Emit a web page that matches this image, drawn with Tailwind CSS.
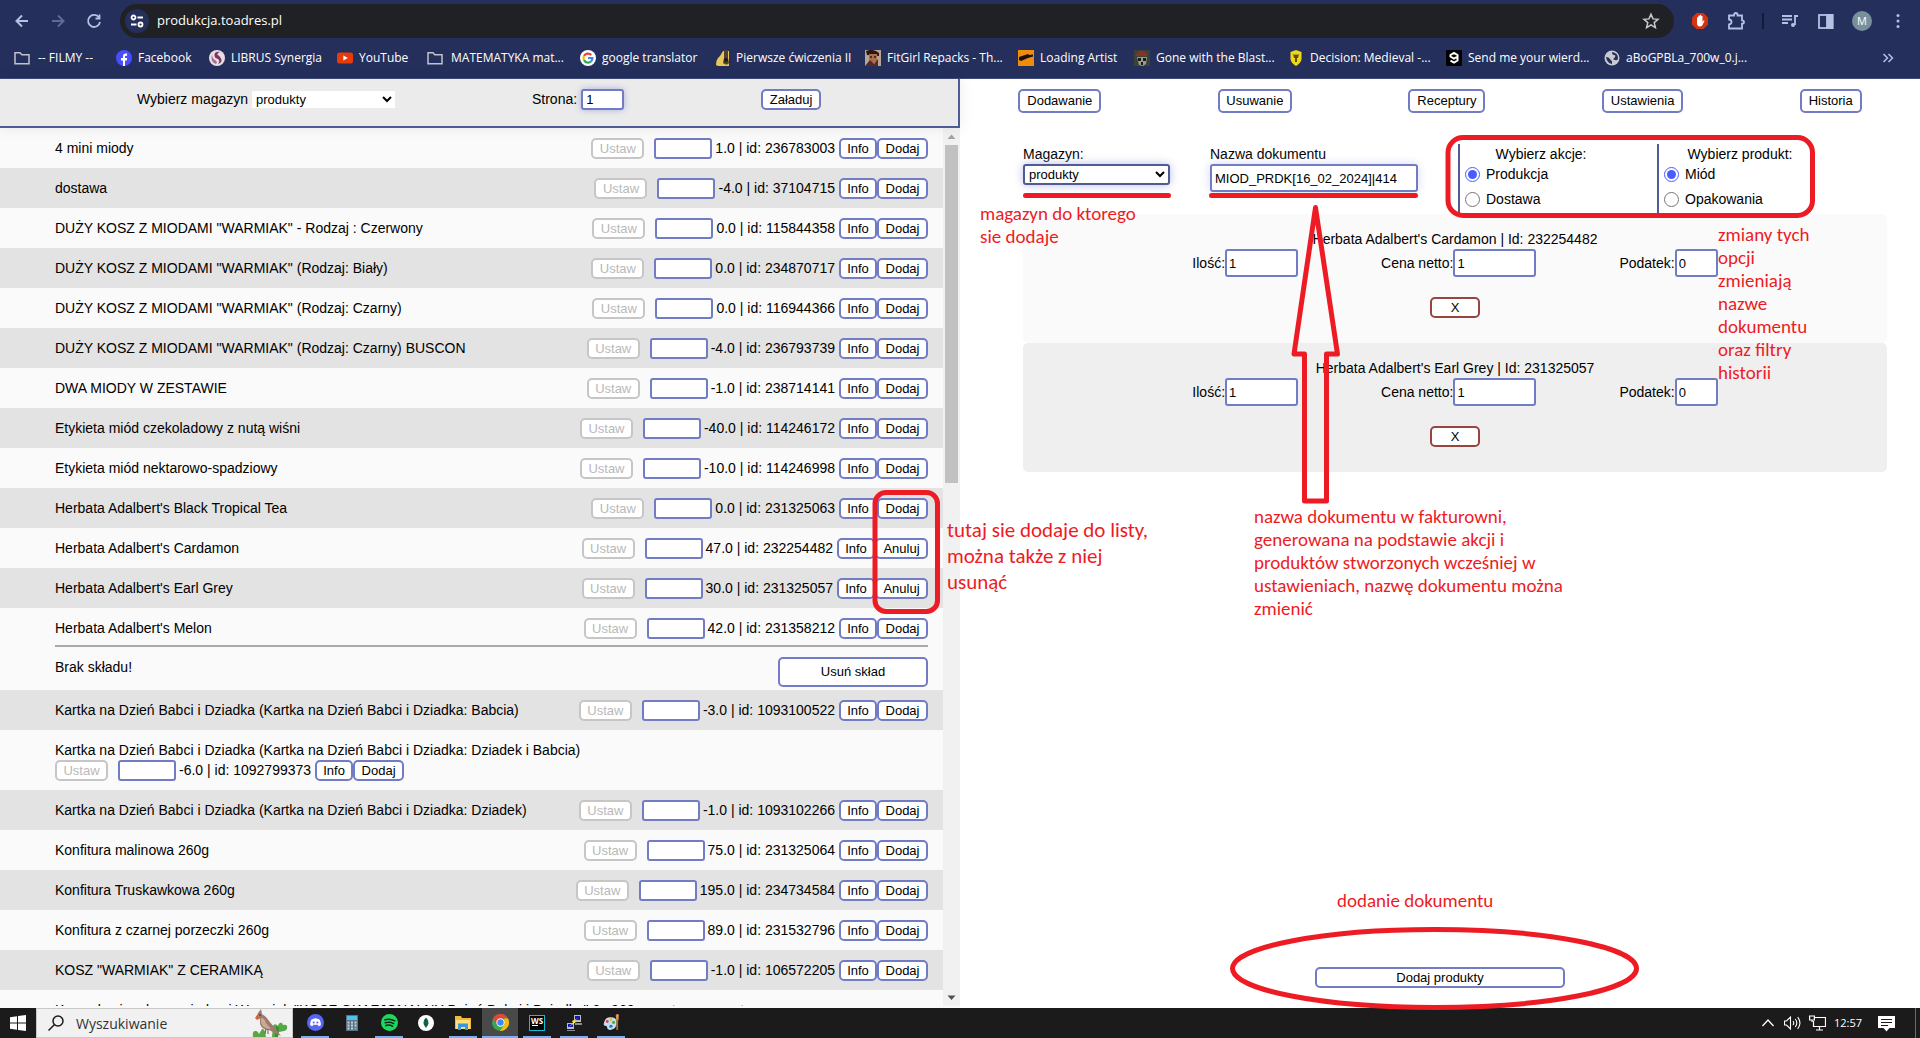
<!DOCTYPE html>
<html lang="pl">
<head>
<meta charset="utf-8">
<title>produkcja.toadres.pl</title>
<script src="https://cdn.jsdelivr.net/npm/@tailwindcss/browser@4"></script>
</head>
<body class="relative flex h-screen flex-col overflow-hidden bg-white font-['Liberation_Sans',Arial,sans-serif] text-[14px] text-black">

<!-- Browser toolbar -->
<header class="shrink-0 border-b border-[#3d4a7a] bg-[#252f5c] font-['Open_Sans',sans-serif] text-white">
  <div class="flex h-[42px] items-center pr-3 pl-3">
    <div class="flex items-center gap-4 text-[#b4c0e4]">
      <button aria-label="Wstecz" class="size-5"><svg viewBox="0 0 20 20" fill="none" stroke="currentColor" stroke-width="2"><path d="M16 10H4.500M10 4.500 4.500 10 10 15.500"/></svg></button>
      <button aria-label="Dalej" class="size-5 text-[#5e6a98]"><svg viewBox="0 0 20 20" fill="none" stroke="currentColor" stroke-width="2"><path d="M4 10H15.500M10 4.500 15.500 10 10 15.500"/></svg></button>
      <button aria-label="Odśwież" class="size-5"><svg viewBox="0 0 20 20" fill="none" stroke="currentColor" stroke-width="1.800"><path d="M15 6.500A6 6 0 1 0 16 11"/><path d="M15.500 3.500V7.500H11.500"/></svg></button>
    </div>
    <div class="ml-4 flex h-[34px] flex-1 items-center rounded-full bg-[#202124] pr-[13px] pl-[5px]">
      <span class="flex size-6 items-center justify-center rounded-full bg-[#252f5c]">
        <svg class="size-4" viewBox="0 0 16 16" fill="none" stroke="#fff" stroke-width="1.800"><circle cx="4.500" cy="4.500" r="2"/><path d="M8.500 4.500H14M2 11.500H7.500"/><circle cx="11.500" cy="11.500" r="2"/></svg>
      </span>
      <input aria-label="Adres" value="produkcja.toadres.pl" class="ml-2 flex-1 bg-transparent text-[13px] outline-none">
      <svg class="size-5" viewBox="0 0 20 20" fill="none" stroke="#c7c9cf" stroke-width="1.500"><path d="m10 3.200 2 4.700 5 .4-3.800 3.300 1.200 5L10 13.900l-4.400 2.700 1.200-5L3 8.300l5-.4z"/></svg>
    </div>
    <div class="ml-4 flex items-center gap-4 text-[#b4c0e4]">
      <svg class="size-5" viewBox="0 0 20 20"><path d="M6.500 2h7L18 6.500v7L13.500 18h-7L2 13.500v-7z" fill="#d3330f"/><path d="M7 10V6.500q.7-.7 1.300 0V5q.7-.8 1.400 0v-.8q.8-.7 1.400 0V5q.7-.7 1.400 0v6l1-1.400q1-.4 1 .5L12.500 14q-1 1.500-3 1.500Q7 15.300 7 12z" fill="#fff"/></svg>
      <svg class="size-5" viewBox="0 0 20 20" fill="none" stroke="currentColor" stroke-width="1.800"><path d="M3 4.500h5q0-2.500 1.800-2.500t1.800 2.500H16v4.800q2 0 2 1.700t-2 1.700V17.500H3v-4q2.500-.3 2.500-2.500T3 8.500z"/></svg>
      <span class="h-4 w-[2px] bg-[#131b3d]"></span>
      <svg class="size-5" viewBox="0 0 20 20" fill="none" stroke="currentColor" stroke-width="1.800"><path d="M2 5h10M2 8.500h10M2 12h6M18 5h-3v9"/><circle cx="13" cy="14" r="2" fill="currentColor" stroke="none"/></svg>
      <svg class="size-5" viewBox="0 0 20 20" fill="none" stroke="currentColor" stroke-width="1.800"><rect x="3" y="4" width="13.500" height="13"/><path d="M11 4h5.500v13H11z" fill="currentColor"/></svg>
      <span class="flex size-5 items-center justify-center rounded-full bg-[#78909c] text-[11px] text-white">M</span>
      <svg class="size-5" viewBox="0 0 20 20" fill="currentColor"><circle cx="10" cy="4.500" r="1.500"/><circle cx="10" cy="10" r="1.500"/><circle cx="10" cy="15.500" r="1.500"/></svg>
    </div>
  </div>

  <nav class="grid h-9 grid-cols-[102px_93px_128px_90px_153px_136px_149px_153px_116px_154px_158px_158px_1fr_auto] items-center pr-6 pb-1 pl-[14px] text-[12px] whitespace-nowrap">
    <a href="#" class="flex items-center gap-2"><svg class="size-4" viewBox="0 0 16 16" fill="none" stroke="#c2c3c8" stroke-width="1.500"><path d="M1 2.800h5l1.800 2H15v9H1z"/></svg>-- FILMY --</a>
    <a href="#" class="flex items-center gap-[6px]"><svg class="size-4" viewBox="0 0 16 16"><circle cx="8" cy="8" r="8" fill="#4a4cff"/><path d="M7 16v-5.500H5V8h2V6.300Q7 3.500 9.700 3.500h1.400v2.200H10q-1 0-1 1V8h2.200l-.4 2.500H9V16z" fill="#fff"/></svg>Facebook</a>
    <a href="#" class="flex items-center gap-[6px]"><svg class="size-4" viewBox="0 0 16 16"><circle cx="8" cy="8" r="8" fill="#e8dfe5"/><path d="M11 2Q6 1 5.500 4.500T9 9q2.500 2 0 5 5-2 3-5.500T8.500 5Q8 3 11 2z" fill="#7d3560"/><path d="M3 4q0 4 3 6t1 4Q1 12 3 4z" fill="#a8708f"/></svg>LIBRUS Synergia</a>
    <a href="#" class="flex items-center gap-[6px]"><svg class="size-4" viewBox="0 0 16 16"><rect y="2.500" width="16" height="11" rx="2.500" fill="#e63c0a"/><path d="m6.300 5.500 4.500 2.500-4.500 2.500z" fill="#fff"/></svg>YouTube</a>
    <a href="#" class="flex items-center gap-2"><svg class="size-4" viewBox="0 0 16 16" fill="none" stroke="#c2c3c8" stroke-width="1.500"><path d="M1 2.800h5l1.800 2H15v9H1z"/></svg>MATEMATYKA mat...</a>
    <a href="#" class="flex items-center gap-[6px]"><svg class="size-4" viewBox="0 0 16 16"><circle cx="8" cy="8" r="8" fill="#fff"/><g fill="none" stroke-width="2.200"><path d="M11.300 5A4.500 4.500 0 0 0 4 6" stroke="#ea4335"/><path d="M4 6a4.500 4.500 0 0 0 0 4" stroke="#fbbc05"/><path d="M4 10a4.500 4.500 0 0 0 7 1.500" stroke="#34a853"/><path d="M11 11.500Q12.500 10 12.400 8H8" stroke="#4285f4"/></g></svg>google translator</a>
    <a href="#" class="flex items-center gap-1"><svg class="size-4" viewBox="0 0 16 16"><path d="M0 15Q0 9 4 6l3-5h6v15H2z" fill="#e6c85b"/><path d="M8 0h4v8l1 5q-2 3-6 0l1-5z" fill="#54402f"/><circle cx="10" cy="10" r="2" fill="#211a18"/></svg>Pierwsze ćwiczenia II</a>
    <a href="#" class="flex items-center gap-[6px]"><svg class="size-4" viewBox="0 0 16 16"><path d="M0 0h16v16H0z" fill="#b7a494"/><path d="M1 1q7-3 13 2v3L2 5z" fill="#2a1714"/><path d="M4 4h8v7l-4 3-4-4z" fill="#a8704c"/><path d="M0 16 5 10l4 4 4-5v7zM5 6h2v2H5zM9 6h2v2H9z" fill="#542a24"/></svg>FitGirl Repacks - Th...</a>
    <a href="#" class="flex items-center gap-[6px]"><svg class="size-4" viewBox="0 0 16 16"><path d="M0 0h16v16H0z" fill="#f08c0a"/><path d="m1 7 9-3 1 1 4-.5v2L10 8l-7 3-2-1z" fill="#17110a"/></svg>Loading Artist</a>
    <a href="#" class="flex items-center gap-[6px]"><svg class="size-4" viewBox="0 0 16 16"><path d="M0 0h16v16H0z" fill="#3c4238"/><path d="M3 3q5-5 10 0v3H2z" fill="#843425"/><path d="M3 7h10l-1 7-3 2-4-1z" fill="#9a9c86"/><path d="M4 8h3v3H4zM9 8h3v3H9zM7 12h2v3H7z" fill="#161b18"/></svg>Gone with the Blast...</a>
    <a href="#" class="flex items-center gap-[6px]"><svg class="size-4" viewBox="0 0 16 16"><path d="m8 0 5.500 2v7Q13 13 8 16 3 13 2.500 9V2z" fill="#efd715"/><path d="m5 4 2 1 1-1 1 1 2-1-1 4H9v4H7V8H6z" fill="#5b5010"/></svg>Decision: Medieval -...</a>
    <a href="#" class="flex items-center gap-[6px]"><svg class="size-4" viewBox="0 0 16 16"><rect width="16" height="16" rx="1" fill="#000"/><path d="M11.500 6.500 8 8.500 4.500 6.500V5L8 3l3.500 2v5.500L8 12.700l-3.500-2" fill="none" stroke="#fff" stroke-width="2"/></svg>Send me your wierd...</a>
    <a href="#" class="flex items-center gap-[6px]"><svg class="size-4" viewBox="0 0 16 16"><circle cx="8" cy="8" r="7.500" fill="#c8cad0"/><path d="M2 7q3 0 4 2t2 2v3Q3 13 2 7zM8 2q0 3 2 3t1 2-2 2 2 1 3-2Q14 3 8 2z" fill="#252f5c"/></svg>aBoGPBLa_700w_0.j...</a>
    <button aria-label="Więcej zakładek" class="w-4"><svg class="w-4" viewBox="0 0 16 16" fill="none" stroke="#b4c0e4" stroke-width="1.500"><path d="m3.500 4 4 4-4 4M8.500 4l4 4-4 4"/></svg></button>
  </nav>
</header>

<main class="flex min-h-0 flex-1">
  <!-- Stock list -->
  <section class="flex w-1/2 flex-col bg-[#fafafa] pb-[2px]">
    <div class="relative z-10 flex h-[49px] shrink-0 items-start justify-evenly border-r-2 border-b-2 border-[#4f5b93] bg-[#ebebeb] pt-[10px] shadow-[0_0_14px_rgba(0,0,0,0.08)]">
      <div class="flex h-5 items-center gap-1"><label for="mag">Wybierz magazyn</label><select id="mag" class="h-[17px] w-[143px] bg-white text-[13px]"><option>produkty</option></select></div>
      <div class="flex h-[21px] items-center gap-1"><label for="strona">Strona:</label><input id="strona" value="1" class="h-[21px] w-[43px] rounded-[3px] border-2 border-[#727cc5] bg-white px-[3px] text-[13px] shadow-[0_0_6px_#a9afe0]"></div>
      <button class="h-[21px] w-[60px] rounded-[5px] border-2 border-[#727cc5] bg-white text-[13px] leading-[16px]">Załaduj</button>
    </div>
    <div class="flex min-h-0 flex-1">
      <div id="rows" class="min-w-0 flex-1 overflow-hidden"></div>
      <div class="flex w-[17px] flex-col items-center justify-between bg-[#f1f1f1]">
        <svg class="h-[17px] w-[17px] shrink-0" viewBox="0 0 17 17" fill="#a3a3a3"><path d="M4.500 11h8l-4-4.500z"/></svg>
        <div class="w-[13px] flex-1"><div class="h-[40%] bg-[#c1c1c1]"></div></div>
        <svg class="h-[17px] w-[17px] shrink-0" viewBox="0 0 17 17" fill="#505050"><path d="M4.500 6.500h8l-4 4.500z"/></svg>
      </div>
    </div>
  </section>

  <!-- Document panel -->
  <section class="flex w-1/2 flex-col pt-[10px] pb-5">
    <nav class="flex justify-around text-[13px] leading-[20px]">
      <button class="w-[83px] rounded-[5px] border-2 border-[#727cc5] bg-white">Dodawanie</button>
      <button class="w-[74px] rounded-[5px] border-2 border-[#727cc5] bg-white">Usuwanie</button>
      <button class="w-[77px] rounded-[5px] border-2 border-[#727cc5] bg-white">Receptury</button>
      <button class="w-[81px] rounded-[5px] border-2 border-[#727cc5] bg-white">Ustawienia</button>
      <button class="w-[62px] rounded-[5px] border-2 border-[#727cc5] bg-white">Historia</button>
    </nav>

    <div class="mt-[31px] ml-[63px] flex h-[70px] gap-10">
      <div class="flex w-[147px] flex-col"><label for="mag2" class="leading-[20px]">Magazyn:</label><select id="mag2" class="h-[21px] rounded-[3px] border-2 border-[#4f5b93] bg-white text-[13px] shadow-[0_0_10px_#b9bde6]"><option>produkty</option></select></div>
      <div class="flex w-[208px] flex-col"><label for="doc" class="leading-[20px]">Nazwa dokumentu</label><input id="doc" value="MIOD_PRDK[16_02_2024]|414" class="h-7 rounded-[3px] border-2 border-[#727cc5] bg-white px-[3px] text-[13px] shadow-[0_0_10px_#d5d8f2]"></div>
      <div class="flex gap-[35px]">
        <fieldset class="w-[164px] border-l-2 border-[#4f5b93]">
          <div class="text-center leading-[20px]">Wybierz akcje:</div>
          <label class="flex h-5 items-center gap-[6px] pl-[5px]"><input type="radio" name="akcja" checked class="size-[15px] accent-[#4a5cff]">Produkcja</label>
          <label class="mt-[5px] flex h-5 items-center gap-[6px] pl-[5px]"><input type="radio" name="akcja" class="size-[15px] accent-[#4a5cff]">Dostawa</label>
        </fieldset>
        <fieldset class="w-[164px] border-l-2 border-[#4f5b93]">
          <div class="text-center leading-[20px]">Wybierz produkt:</div>
          <label class="flex h-5 items-center gap-[6px] pl-[5px]"><input type="radio" name="produkt" checked class="size-[15px] accent-[#4a5cff]">Miód</label>
          <label class="mt-[5px] flex h-5 items-center gap-[6px] pl-[5px]"><input type="radio" name="produkt" class="size-[15px] accent-[#4a5cff]">Opakowania</label>
        </fieldset>
      </div>
    </div>

    <div id="cards" class="mr-[33px] ml-[63px]"></div>

    <button class="mt-auto h-[21px] w-[250px] self-center rounded-[5px] border-2 border-[#727cc5] bg-white text-[13px] leading-[16px]">Dodaj produkty</button>
  </section>
</main>

<!-- Windows taskbar -->
<footer class="flex h-[30px] shrink-0 items-center bg-[#1b1b1b] font-['Open_Sans',sans-serif] text-white">
  <button aria-label="Start" class="flex w-9 justify-center"><svg class="size-4" viewBox="0 0 16 16" fill="#fff"><path d="M0 2.200 7 1.200V7.500H0zM8 1l8-1v7.500H8zM0 8.500h7v6.300L0 13.800zM8 8.500h8V16l-8-1z"/></svg></button>
  <div class="flex h-[30px] w-[257px] items-center border border-[#c8c8c8] bg-[#f1f1f1] pr-1 pl-[11px]">
    <svg class="size-4" viewBox="0 0 16 16" fill="none" stroke="#1b1b1b" stroke-width="1.500"><circle cx="10" cy="6" r="5"/><path d="M6.500 9.500.5 15.500"/></svg>
    <input aria-label="Szukaj" placeholder="Wyszukiwanie" class="ml-3 min-w-0 flex-1 bg-transparent text-[14px] outline-none placeholder:text-[#333]">
    <svg class="h-7 w-9" viewBox="0 0 36 28"><path d="M1 28q-1-7 3-6 2 0 3 3l3-5q3 0 3 4l1 4zM20 28l1-11q1-3 4-1l1 1q1-4 4-3l1 2q3-1 4 1 1 4-3 5l-5 1-1 5z" fill="#57a845"/><path d="m23 28 1-11 3 1-1 10z" fill="#3d8c38"/><path d="M4 9 6 4l3-4 1 5q5 3 7 7l6 7 6 8-8-4-4-2q-7 0-9-6L8 10z" fill="#9d7a6c"/><path d="M9 9q4 0 5 5l5 6q-8 0-10-6z" fill="#c8a896"/><path d="m3 9 2-3 2 4-2 1z" fill="#e4622e"/><circle cx="8" cy="6" r=".8" fill="#222"/><path d="m14 20-1 5M16 20v5" stroke="#765344"/></svg>
  </div>
  <div class="ml-1 flex h-[30px] items-stretch gap-[1px]">
    <button aria-label="Discord" class="flex w-9 flex-col items-center justify-between pt-[6px]"><svg class="h-[17px] w-[17px]" viewBox="0 0 16 16"><circle cx="8" cy="8" r="8" fill="#5865f2"/><path d="M4 5.500q2-1.500 4-1.500t4 1.500q1.300 3 1 5l-2 1-1-1.300H6L5 11.500l-2-1q-.3-2 1-5z" fill="#fff"/><circle cx="6.300" cy="8" r="1" fill="#5865f2"/><circle cx="9.700" cy="8" r="1" fill="#5865f2"/></svg><span class="h-[2px] w-7 bg-[#76b0f5]"></span></button>
    <button aria-label="Kalkulator" class="flex w-9 flex-col items-center pt-[7px]"><svg class="size-4" viewBox="0 0 16 16"><path d="M2 0h12v16H2z" fill="#5e7381"/><path d="M3 1h10v4H3z" fill="#4ec3f2"/><path d="M3.500 6.500h2v2h-2zM7 6.500h2v2H7zM10.500 6.500h2v2h-2zM3.500 9.500h2v2h-2zM7 9.500h2v2H7zM10.500 9.500h2v2h-2zM3.500 12.500h2v2h-2zM7 12.500h2v2H7z" fill="#c3d0d8"/><path d="M10.500 12.500h2v2h-2z" fill="#4ec3f2"/></svg></button>
    <button aria-label="Spotify" class="flex w-9 flex-col items-center justify-between pt-[6px]"><svg class="h-[17px] w-[17px]" viewBox="0 0 16 16"><circle cx="8" cy="8" r="8" fill="#1ed760"/><path d="M3.500 5.500q5-1.500 9.500 1M4 8.200q4.200-1.200 8 .8M4.500 10.800q3.500-1 6.500.8" fill="none" stroke="#12261a" stroke-width="1.400" stroke-linecap="round"/></svg><span class="h-[2px] w-7 bg-[#76b0f5]"></span></button>
    <button aria-label="MongoDB" class="flex w-9 flex-col items-center pt-[7px]"><svg class="size-4" viewBox="0 0 16 16"><circle cx="8" cy="8" r="8" fill="#fff"/><path d="M8 2.500q5 5 0 10.500-5-5.500 0-10.500z" fill="#116149"/></svg></button>
    <button aria-label="Eksplorator" class="flex w-9 flex-col items-center justify-between pt-[7px]"><svg class="size-4" viewBox="0 0 16 16"><path d="M0 1h6l1 2h9v11H0z" fill="#f5b83d"/><path d="M1 5h14v9H1z" fill="#ffdf7a"/><path d="M3 8.500h10V15h-3v-3H6v3H3z" fill="#3a96dd"/></svg><span class="h-[2px] w-7 bg-[#76b0f5]"></span></button>
    <button aria-label="Chrome" class="flex w-9 flex-col items-center justify-between bg-[#494949] pt-[6px]"><svg class="h-[17px] w-[17px]" viewBox="0 0 16 16"><circle cx="8" cy="8" r="8" fill="#34a853"/><path d="M1.100 4A8 8 0 0 1 15 4.200H8L4.500 10z" fill="#ea4335"/><path d="M15 4.200A8 8 0 0 1 7.500 16L11.500 10V4.200z" fill="#fbbc05"/><circle cx="8" cy="8" r="3.900" fill="#fff"/><circle cx="8" cy="8" r="3" fill="#4285f4"/></svg><span class="h-[2px] w-9 bg-[#76b0f5]"></span></button>
    <button aria-label="WebStorm" class="flex w-9 flex-col items-center justify-between pt-[7px]"><span class="flex size-4 flex-col items-start border border-[#12bcd8] bg-black pl-px text-[8px] leading-[9px] font-bold">WS<span class="ml-px h-px w-[6px] bg-white"></span></span><span class="h-[2px] w-7 bg-[#76b0f5]"></span></button>
    <button aria-label="PuTTY" class="flex w-9 flex-col items-center justify-between pt-[7px]"><svg class="size-4" viewBox="0 0 16 16"><path d="M8 0h7v7H8zM1 8h7v6H1z" fill="#bcbcbc"/><path d="M9 1h5v4H9zM2 9h5v3H2z" fill="#1019b0"/><path d="M9 8h7v2H9zM1 15h8v1H1z" fill="#8b8b8b"/><path d="m12 3-6 3 1 2-4 4 7-5-2-1z" fill="#ffee22"/></svg><span class="h-[2px] w-7 bg-[#76b0f5]"></span></button>
    <button aria-label="Paint" class="flex w-9 flex-col items-center justify-between pt-[6px]"><svg class="h-[17px] w-[17px]" viewBox="0 0 16 16"><path d="M1 8q1-5 6-5 6 0 6 5 0 6-6 7-3 0-3-2t-2-2-1-3z" fill="#bfe0f2"/><circle cx="4" cy="7" r="1.400" fill="#e34234"/><circle cx="7.500" cy="5.300" r="1.300" fill="#f4b81b"/><circle cx="10" cy="8" r="1.400" fill="#3fa64b"/><circle cx="7.500" cy="11.500" r="1.500" fill="#2a6fc2"/><path d="M12.500 6h1.700v9h-1.700z" fill="#b8692b"/><path d="M12 1q2-2 3 0l-.5 5h-2z" fill="#e2934a"/></svg><span class="h-[2px] w-7 bg-[#76b0f5]"></span></button>
  </div>
  <div class="ml-auto flex h-[30px] items-center pr-1">
    <svg class="mr-2 size-4" viewBox="0 0 16 16" fill="none" stroke="#fff" stroke-width="1.300"><path d="m2.500 11 5.500-6 5.500 6"/></svg>
    <svg class="mr-2 h-4 w-[17px]" viewBox="0 0 17 16" fill="none" stroke="#fff" stroke-width="1.100"><path d="M.5 6h2l4-4v12l-4-4h-2zM9 6q1.500 2 0 4M11.300 4q3 4 0 8M13.700 2.200q4.500 5.800 0 11.600"/></svg>
    <svg class="mr-2 h-4 w-[17px]" viewBox="0 0 17 16" fill="none" stroke="#fff" stroke-width="1.200"><path d="M6 2.500h10.500v9H4.500V6M10.500 11.500V15M7 15h7M.6 1h4.800v4H.6zM3 5v2"/></svg>
    <span class="mr-4 text-[11px]">12:57</span>
    <svg class="mr-5 h-[17px] w-[17px]" viewBox="0 0 17 17"><path d="M0 1h17v12h-5.500l-3 3.500-3-3.500H0z" fill="#fff"/><path d="M3 4.500h11M3 7.500h11M3 10.500h7" stroke="#1b1b1b" stroke-width="1.200"/></svg>
    <span class="h-[30px] w-px bg-[#6c6c6c]"></span>
  </div>
</footer>

<!-- Red annotations drawn over the page -->
<svg class="pointer-events-none absolute top-0 left-0 z-20 h-[1038px] w-[1920px]" viewBox="0 0 1920 1038" fill="none" stroke="#ed1c24" stroke-width="5" stroke-linecap="round" stroke-linejoin="round">
  <path d="M1025.500 195.500H1168.500M1211.500 195.500H1415.500"/>
  <rect x="1448" y="137.500" width="364.500" height="78" rx="15"/>
  <rect x="875" y="492.500" width="62.500" height="119" rx="11"/>
  <ellipse cx="1434.500" cy="968.500" rx="202" ry="39"/>
  <path d="M1315.500 207.500 1294 354h10.500V501h22V354h11z"/>
</svg>
<div class="pointer-events-none absolute inset-0 z-20 font-[Carlito,Lato,sans-serif] text-[19px] leading-[23px] whitespace-nowrap text-[#ed1c24]">
  <p class="absolute top-[202px] left-[980px]">magazyn do ktorego<br>sie dodaje</p>
  <p class="absolute top-[223px] left-[1718px]">zmiany tych<br>opcji<br>zmieniają<br>nazwe<br>dokumentu<br>oraz filtry<br>historii</p>
  <p class="absolute top-[505px] left-[1254px]">nazwa dokumentu w fakturowni,<br>generowana na podstawie akcji i<br>produktów stworzonych wcześniej w<br>ustawieniach, nazwę dokumentu można<br>zmienić</p>
  <p class="absolute top-[889px] left-[1337px]">dodanie dokumentu</p>
  <p class="absolute top-[517px] left-[947px] text-[21px] leading-[26px]">tutaj sie dodaje do listy,<br>można także z niej<br>usunąć</p>
</div>

<script>
const products = [
  ['4 mini miody', '1.0', '236783003'],
  ['dostawa', '-4.0', '37104715'],
  ['DUŻY KOSZ Z MIODAMI "WARMIAK" - Rodzaj : Czerwony', '0.0', '115844358'],
  ['DUŻY KOSZ Z MIODAMI "WARMIAK" (Rodzaj: Biały)', '0.0', '234870717'],
  ['DUŻY KOSZ Z MIODAMI "WARMIAK" (Rodzaj: Czarny)', '0.0', '116944366'],
  ['DUŻY KOSZ Z MIODAMI "WARMIAK" (Rodzaj: Czarny) BUSCON', '-4.0', '236793739'],
  ['DWA MIODY W ZESTAWIE', '-1.0', '238714141'],
  ['Etykieta miód czekoladowy z nutą wiśni', '-40.0', '114246172'],
  ['Etykieta miód nektarowo-spadziowy', '-10.0', '114246998'],
  ["Herbata Adalbert's Black Tropical Tea", '0.0', '231325063'],
  ["Herbata Adalbert's Cardamon", '47.0', '232254482', 'added'],
  ["Herbata Adalbert's Earl Grey", '30.0', '231325057', 'added'],
  ["Herbata Adalbert's Melon", '42.0', '231358212', 'open'],
  ['Kartka na Dzień Babci i Dziadka (Kartka na Dzień Babci i Dziadka: Babcia)', '-3.0', '1093100522'],
  ['Kartka na Dzień Babci i Dziadka (Kartka na Dzień Babci i Dziadka: Dziadek i Babcia)', '-6.0', '1092799373', 'wide'],
  ['Kartka na Dzień Babci i Dziadka (Kartka na Dzień Babci i Dziadka: Dziadek)', '-1.0', '1093102266'],
  ['Konfitura malinowa 260g', '75.0', '231325064'],
  ['Konfitura Truskawkowa 260g', '195.0', '234734584'],
  ['Konfitura z czarnej porzeczki 260g', '89.0', '231532796'],
  ['KOSZ "WARMIAK" Z CERAMIKĄ', '-1.0', '106572205'],
  ['Kosz okazjonalny z miodami Warmiak "KOSZ OKAZJONALNY Dzień Babci i Dziadka" 2x 260g, zestaw prezentowy', '0.0', '1093102301', 'wide'],
];
document.getElementById('rows').innerHTML = products.map(([name, qty, id, state], i) => `
  <div class="${i % 2 ? 'bg-[#e3e3e3]' : 'bg-[#fafafa]'} pr-[15px] pl-[55px]">
    <div class="${state === 'open' ? 'flex flex-wrap justify-between pt-[10px] pb-[6px]' : 'flex flex-wrap justify-between pt-[10px] pb-[9px]'}">
      <span class="${state === 'wide' ? 'basis-full leading-[20px] whitespace-nowrap' : 'leading-[20px]'}">${name}</span>
      <div class="flex h-[21px] items-center">
        <button disabled class="h-[21px] w-[53px] rounded-[5px] border-2 border-[#c6c6c6] bg-white text-[13px] leading-[16px] text-[#b9b9b9]">Ustaw</button>
        <input aria-label="Nowy stan: ${name.replace(/"/g, '&quot;')}" class="mr-[3px] ml-[10px] h-[21px] w-[58px] rounded-[3px] border-2 border-[#727cc5] bg-white px-1 text-[13px]">
        <span class="mr-1">${qty} | id: ${id}</span>
        <button class="h-[21px] w-[38px] rounded-[5px] border-2 border-[#727cc5] bg-white text-[13px] leading-[16px]">Info</button>
        <button class="${state === 'added' ? 'w-[53px]' : 'w-[51px]'} h-[21px] rounded-[5px] border-2 border-[#727cc5] bg-white text-[13px] leading-[16px]">${state === 'added' ? 'Anuluj' : 'Dodaj'}</button>
      </div>
    </div>
    ${state === 'open' ? `<div class="flex items-start justify-between border-t-2 border-[#a9a9a9] pt-[10px] pb-[3px]"><span class="leading-[20px]">Brak składu!</span><button class="h-[30px] w-[150px] rounded-[5px] border-2 border-[#727cc5] bg-white text-[13px]">Usuń skład</button></div>` : ''}
  </div>`).join('');

const items = [["Herbata Adalbert's Cardamon", '232254482'], ["Herbata Adalbert's Earl Grey", '231325057']];
document.getElementById('cards').innerHTML = items.map(([name, id], i) => `
  <div class="${i % 2 ? 'bg-[#efefef]' : 'bg-[#fafafa]'} flex flex-col items-center rounded-[5px] pt-[15px] pb-[25px]">
    <p class="leading-[20px]">${name} | Id: ${id}</p>
    <div class="flex w-full justify-evenly px-[10%]">
      <label class="flex items-center">Ilość:<input value="1" class="h-7 w-[73px] rounded-[3px] border-2 border-[#727cc5] bg-white px-[2px] text-[13px]"></label>
      <label class="flex items-center">Cena netto:<input value="1" class="h-7 w-[83px] rounded-[3px] border-2 border-[#727cc5] bg-white px-[2px] text-[13px]"></label>
      <label class="flex items-center">Podatek:<input value="0" class="h-7 w-[43px] rounded-[3px] border-2 border-[#727cc5] bg-white px-[2px] text-[13px]"></label>
    </div>
    <button aria-label="Usuń ${name}" class="mt-5 h-[21px] w-[50px] rounded-[5px] border-2 border-[#964540] bg-white text-[13px] leading-[16px]">X</button>
  </div>`).join('');
</script>
</body>
</html>
